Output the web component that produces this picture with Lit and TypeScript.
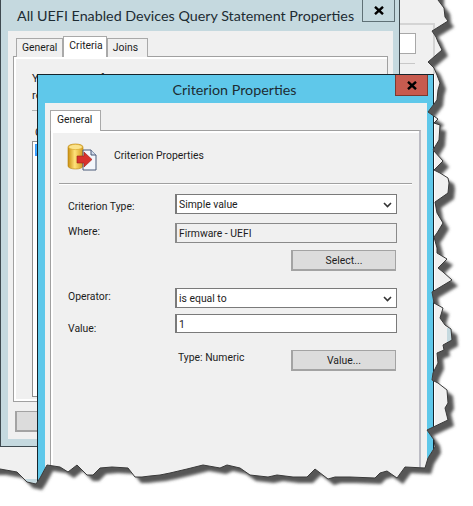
import { LitElement, html, css, svg } from 'lit';
import { customElement } from 'lit/decorators.js';

// outline of the torn screenshot edge, top right round to bottom left
const TEAR: [number, number][] = [
  [438, 0], [444, 8], [445, 17], [448, 21], [432, 31], [436, 37], [438, 42], [442, 50], [428, 62],
  [434, 68], [437, 75], [440, 83], [438, 90], [437, 100], [428, 112], [438, 119], [434, 123], [440, 125],
  [439, 140], [433, 150], [443, 161], [434, 170], [440, 173], [448, 178], [449, 183], [448, 193], [435, 202],
  [437, 213], [443, 223], [437, 233], [434, 237], [437, 248], [437, 253], [447, 259], [438, 268], [443, 272],
  [452, 280], [432, 292], [434, 303], [443, 308], [440, 318], [445, 325], [451, 329], [452, 340], [443, 345],
  [444, 350], [437, 353], [438, 363], [433, 373], [432, 380], [438, 383], [447, 390], [448, 403], [445, 408],
  [448, 420], [427, 430], [434, 440], [435, 447], [428, 458], [425, 468], [405, 467], [397, 478], [387, 471],
  [380, 473], [375, 478], [350, 477], [335, 477], [328, 479], [315, 469], [307, 477], [293, 477], [277, 475],
  [268, 477], [250, 475], [240, 468], [227, 465], [220, 468], [203, 465], [187, 469], [170, 473], [160, 475],
  [150, 476], [142, 477], [135, 477], [128, 468], [112, 467], [100, 468], [93, 475], [87, 475], [77, 465],
  [68, 472], [60, 467], [47, 465], [40, 478], [36, 484], [27, 482], [17, 472], [0, 469],
];

const edge = TEAR.map(([x, y]) => `${x},${y}`).join(' ');
const inside = `0,-20 438,-20 ${edge} -20,469 -20,-20`;
const outside = `${edge} 0,506 473,506 473,0`;

const chevron = html`<svg class="chev" width="9" height="6" viewBox="0 0 9 6">
  <path d="M1 1l3.500 3.500L8 1" fill="none" stroke="#333" stroke-width="1.600" />
</svg>`;

const closeX = html`<svg width="10" height="9" viewBox="0 0 10 9">
  <path d="M1 .8l8 7.400M9 .8L1 8.200" fill="none" stroke="#000" stroke-width="2.400" />
</svg>`;

@customElement('app-root')
export class AppRoot extends LitElement {
  static styles = css`
    :host {
      display: block;
      position: relative;
      width: 473px;
      height: 506px;
      overflow: hidden;
      background: #f0f0f0;
      font-family: Roboto, 'Liberation Sans', sans-serif;
      font-size: 10.400px;
      color: #1c1c1c;
    }

    /* bits of the windows lying behind */
    .rear {
      position: absolute;
      left: 400px;
      top: 23px;
      width: 35px;
      height: 60px;
      box-sizing: border-box;
      border-top: 2px solid #d4d4d4;
      border-right: 2px solid #d4d4d4;
      background: #f0f0f0;
    }

    .rear-input {
      width: 15px;
      height: 19px;
      margin-top: 8px;
      border: 1px solid #a8a8a8;
      border-left: 0;
      background: #fff;
    }

    .rear-rule {
      width: 15px;
      height: 1px;
      margin-top: 9px;
      background: #c8c8c8;
    }

    .scrap {
      position: absolute;
      background: #c5d9df;
    }

    .win {
      position: absolute;
      box-sizing: border-box;
      display: flex;
      flex-direction: column;
      border: 1px solid #3f4a50;
    }

    .win.back {
      left: 0;
      top: -1px;
      width: 400px;
      height: 448px;
      background: #c5d9df;
    }

    .win.front {
      left: 37px;
      top: 74px;
      width: 397px;
      height: 430px;
      background: #5fc8ea;
      border-color: #15242c;
      box-shadow: 1px 0 0 #fff;
    }

    .bar {
      position: relative;
      flex: none;
      font-family: Lato, 'Noto Sans', sans-serif;
      font-size: 14.300px;
      color: #1d2c33;
    }

    .back .bar {
      height: 31px;
      padding-left: 16px;
      line-height: 31px;
    }

    .front .bar {
      height: 28px;
      text-align: center;
      line-height: 29px;
      padding-right: 2px;
    }

    .close {
      position: absolute;
      top: 0;
      display: flex;
      align-items: center;
      justify-content: center;
      box-sizing: border-box;
    }

    .back .close {
      right: 4px;
      width: 33px;
      height: 22px;
      border: 1px solid #5f7076;
      border-top: 0;
    }

    .front .close {
      right: 5px;
      width: 33px;
      height: 21px;
      background: #c75b4f;
      border: 1px solid #7c3a30;
      border-top: 0;
    }

    .panel {
      flex: 1;
      min-height: 0;
      display: flex;
      flex-direction: column;
      background: #f0f0f0;
    }

    .back .panel {
      margin: 0 6px 7px 7px;
      padding: 5px 5px 7px 5px;
    }

    .front .panel {
      margin: 0 6px 0 7px;
      padding: 7px 6px 0 5px;
    }

    .tabs {
      display: flex;
      align-items: flex-end;
      flex: none;
      margin-bottom: -1px;
      position: relative;
    }

    .back .tabs {
      margin-left: 3px;
    }

    .tab {
      box-sizing: border-box;
      height: 19px;
      padding: 0 5px;
      line-height: 17px;
      background: #f0f0f0;
      border: 1px solid #a9a9a9;
      border-bottom: 0;
    }

    .tab.on {
      height: 21px;
      background: #fff;
      position: relative;
      padding: 0 3px 0 5px;
    }

    .back .tab:last-child {
      padding: 0 9px 0 5px;
    }

    .front .tab.on {
      width: 51px;
      padding: 0 0 0 6px;
    }

    .page {
      flex: 1;
      min-height: 0;
      box-sizing: border-box;
      display: flex;
      flex-direction: column;
      overflow: hidden;
      border: 1px solid #a0a0a0;
      box-shadow: inset 2px 2px 0 #fff;
      background: #f0f0f0;
    }

    .back .page {
      padding: 13px 0 0 18px;
      box-shadow: inset 2px 2px 0 #fff, inset 0 -2px 0 #fff;
    }

    .front .page {
      padding: 0 7px 0 8px;
      border-right: 2px solid #bcbcc4;
      border-bottom: 0;
    }

    .intro {
      white-space: nowrap;
      font-size: 11px;
      line-height: 17px;
    }

    .rule {
      width: 100%;
      height: 1px;
      flex: none;
      margin-top: 6px;
      background: #b4b4b4;
    }

    .list-label {
      margin-top: 15px;
      margin-left: 3px;
      line-height: 13px;
      font-size: 11px;
    }

    .list {
      flex: 1;
      margin: 2px 0 4px 0;
      padding: 2px;
      border: 1px solid #8f8f8f;
      background: #fff;
    }

    .list span {
      display: block;
      width: 40px;
      height: 12px;
      padding-left: 1px;
      background: #3399ff;
      color: #fff;
      line-height: 12px;
    }

    .foot {
      flex: none;
      height: 21px;
      margin-top: 9px;
      margin-left: 2px;
    }

    .btn {
      box-sizing: border-box;
      width: 105px;
      height: 21px;
      padding-top: 1px;
      display: flex;
      align-items: center;
      justify-content: center;
      background: #dcdcdc;
      border: 2px solid #a3a3a3;
      border-width: 1px 1px 2px 2px;
    }

    .head {
      display: flex;
      align-items: center;
      gap: 17px;
      height: 52px;
      padding-left: 8px;
      border-bottom: 1px solid #a0a0a0;
      box-shadow: 0 1px 0 #fff;
    }

    .head span {
      margin-top: -3px;
    }

    .form {
      display: grid;
      grid-template-columns: 107px 222px;
      padding: 10px 0 0 9px;
    }

    .form > label {
      line-height: 14px;
    }

    .form > .type-label {
      padding-top: 6px;
    }

    .form > .where-label {
      padding-top: 11px;
    }

    .form > .operator-label {
      grid-column: 1;
      margin-top: 19px;
    }

    .form > .value-label {
      box-sizing: border-box;
      height: 25px;
      padding-top: 14px;
    }

    .field {
      box-sizing: border-box;
      display: flex;
      align-items: center;
      justify-content: space-between;
      height: 20px;
      padding: 1px 4px 0 2px;
      border: 1px solid #7a7a7a;
      border-width: 1px 1px 1px 2px;
      background: #fff;
    }

    .field.readonly {
      margin-top: 9px;
      background: #f0f0f0;
      padding-left: 2px;
      border-color: #8a8a8a;
    }

    .field.operator {
      margin-top: 17px;
    }

    .field.value {
      margin-top: 6px;
      height: 19px;
    }

    .act {
      grid-column: 2;
      justify-self: end;
      margin-top: 7px;
      margin-right: 1px;
    }

    .type-row {
      grid-column: 2;
      display: flex;
      align-items: center;
      justify-content: space-between;
      padding-left: 3px;
      margin-top: 17px;
    }

    .type-row span {
      margin-top: -6px;
    }

    .type-row .btn {
      margin-right: 1px;
    }

    .chev {
      display: block;
    }

    .tear {
      position: absolute;
      inset: 0;
      display: block;
    }
  `;

  render() {
    return html`
      <div class="rear">
        <div class="rear-input"></div>
        <div class="rear-rule"></div>
      </div>
      <div class="scrap" style="left:447px;top:328px;width:6px;height:14px"></div>
      <div class="scrap" style="left:24px;top:479px;width:14px;height:6px"></div>

      <div class="win back">
        <div class="bar">
          All UEFI Enabled Devices Query Statement Properties
          <div class="close">${closeX}</div>
        </div>
        <div class="panel">
          <div class="tabs">
            <div class="tab">General</div>
            <div class="tab on">Criteria</div>
            <div class="tab">Joins</div>
          </div>
          <div class="page">
            <div class="intro">You can specify criteria to narrow the query and limit the results that<br />returned</div>
            <div class="rule"></div>
            <div class="list-label">Criteria:</div>
            <div class="list"><span>Firmware</span></div>
          </div>
          <div class="foot"><div class="btn"></div></div>
        </div>
      </div>

      <div class="win front">
        <div class="bar">
          Criterion Properties
          <div class="close">${closeX}</div>
        </div>
        <div class="panel">
          <div class="tabs"><div class="tab on">General</div></div>
          <div class="page">
            <div class="head">
              <svg width="30" height="28" viewBox="0 0 30 28">
                <defs>
                  <linearGradient id="gold" x1="0" x2="1" y1="0" y2="0">
                    <stop offset="0" stop-color="#c98f10" />
                    <stop offset=".45" stop-color="#ffe27a" />
                    <stop offset="1" stop-color="#d39a1c" />
                  </linearGradient>
                </defs>
                <path d="M1 4c0-4 15-4 15 0v19c0 4-15 4-15 0z" fill="url(#gold)" stroke="#b98412" stroke-width=".6" />
                <ellipse cx="8.500" cy="4" rx="7" ry="2.600" fill="#fbe38c" stroke="#d7a52a" stroke-width=".6" />
                <path d="M16 7h8l5 5v15H16z" fill="#f3f6fb" stroke="#4a5a78" />
                <path d="M24 7v5h5" fill="#cfd9ea" stroke="#4a5a78" />
                <path d="M10 13h7V9l8 7.500-8 7.500v-4h-7z" fill="#d8322c" stroke="#9c1f1a" stroke-width=".6" />
              </svg>
              <span>Criterion Properties</span>
            </div>
            <div class="form">
              <label class="type-label">Criterion Type:</label>
              <div class="field">Simple value ${chevron}</div>
              <label class="where-label">Where:</label>
              <div class="field readonly">Firmware - UEFI</div>
              <div class="btn act">Select...</div>
              <label class="operator-label">Operator:</label>
              <div class="field operator">is equal to ${chevron}</div>
              <label class="value-label">Value:</label>
              <div class="field value">1</div>
              <div class="type-row"><span>Type: Numeric</span> <div class="btn">Value...</div></div>
            </div>
          </div>
        </div>
      </div>

      <svg class="tear" width="473" height="506" viewBox="0 0 473 506">
        <defs>
          <clipPath id="out">${svg`<polygon points=${outside} />`}</clipPath>
          <filter id="soft" x="-5%" y="-5%" width="110%" height="110%">
            <feGaussianBlur stdDeviation="1.500" />
          </filter>
        </defs>
        <polygon points=${outside} fill="#fff" />
        <g clip-path="url(#out)">
          <polygon points=${inside} transform="translate(6 6)" fill="#565656" filter="url(#soft)" />
        </g>
        <polyline points=${edge} fill="none" stroke="#3a3a3a" stroke-width="1" />
      </svg>
    `;
  }
}
